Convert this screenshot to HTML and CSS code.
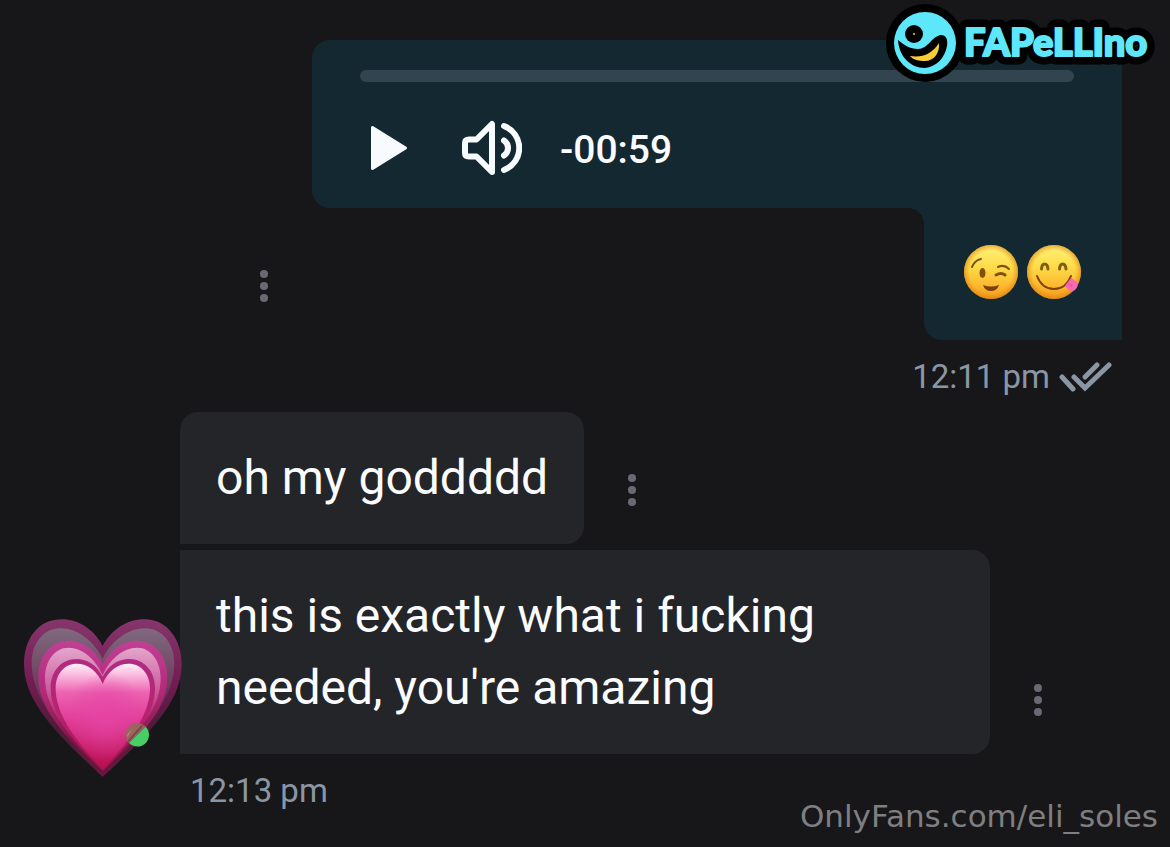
FILE: index.html
```html
<!DOCTYPE html>
<html lang="en">
<head>
  <meta charset="UTF-8" />
  <meta name="viewport" content="width=device-width, initial-scale=1.0"/>
  <title>Chat</title>
  <link rel="stylesheet" href="styles.css">
</head>
<body>

  <main class="chat">

    <section class="group outgoing">
      <div class="row">
        <button class="menu" type="button" aria-label="Message menu"><i></i><i></i><i></i></button>
        <div class="voice">
          <div class="player">
            <input class="track" type="range" min="0" max="59" value="0" aria-label="Seek">
            <div class="controls">
              <button class="play" type="button" aria-label="Play">
                <svg width="64" height="60" viewBox="0 0 64 60">
                  <path d="M12.500 9.500V50.500L45.500 30Z" fill="#f7fbfd" stroke="#f7fbfd" stroke-width="3" stroke-linejoin="round"/>
                </svg>
              </button>
              <button class="volume" type="button" aria-label="Volume">
                <svg width="60" height="60" viewBox="0 0 60 60" fill="none" stroke="#f7fbfd" stroke-width="6" stroke-linecap="round" stroke-linejoin="round">
                  <path d="M30 6V54L14.500 38.500H7Q3 38.500 3 35V25Q3 21.500 7 21.500H14.500Z"/>
                  <path d="M42 8A23.500 23.500 0 0 1 42 52"/>
                  <path d="M42 22.500A9 9 0 0 1 42 37.500"/>
                </svg>
              </button>
              <span class="timer">-00:59</span>
            </div>
          </div>
          <div class="reaction">
            <svg width="56" height="56" viewBox="0 0 56 56" role="img" aria-label="Winking face">
              <defs>
                <linearGradient id="face" x1="0" y1="0" x2="0" y2="1">
                  <stop offset="0" stop-color="#fff27a"/>
                  <stop offset="0.4" stop-color="#fddc4a"/>
                  <stop offset="0.75" stop-color="#fcb92e"/>
                  <stop offset="1" stop-color="#f39a1e"/>
                </linearGradient>
                <radialGradient id="edge">
                  <stop offset="0.78" stop-color="#e88a10" stop-opacity="0"/>
                  <stop offset="1" stop-color="#d87c10" stop-opacity="0.6"/>
                </radialGradient>
              </defs>
              <circle cx="28" cy="28" r="27" fill="url(#face)"/>
              <circle cx="28" cy="28" r="27" fill="url(#edge)"/>
              <g fill="none" stroke="#80500c" stroke-width="2" stroke-linecap="round">
                <path d="M9 23Q12 16 18 15"/>
                <path d="M35 23Q41 20 46 25"/>
                <path d="M33 31Q38 28 42 31" stroke-width="3"/>
              </g>
              <ellipse cx="19.500" cy="29" rx="3" ry="5" fill="#80500c"/>
              <path d="M20 41Q28 44 36 41Q34 47 28 47Q22 47 20 41Z" fill="#7a4010"/>
            </svg>
            <svg width="56" height="56" viewBox="0 0 56 56" role="img" aria-label="Face savoring food">
              <circle cx="28" cy="28" r="27" fill="url(#face)"/>
              <circle cx="28" cy="28" r="27" fill="url(#edge)"/>
              <g fill="none" stroke="#80600c" stroke-width="3" stroke-linecap="round">
                <path d="M15.500 25Q16 20 18.500 20Q21.500 20 22 25"/>
                <path d="M33.500 25Q34 20 36.500 20Q39.500 20 40 25"/>
                <path d="M11 32Q16 45 28 45Q40 45 45 32" stroke="#80400c" stroke-width="2"/>
              </g>
              <path d="M45 34L51 38Q53 42 49 46Q46 48 43 46L39 42Z" fill="#f767b4"/>
              <path d="M43 40L46 42" stroke="#e04a9c" stroke-linecap="round"/>
            </svg>
          </div>
        </div>
      </div>
      <div class="time">
        <span>12:11 pm</span>
        <svg width="54" height="32" viewBox="0 0 54 32" role="img" aria-label="Read" fill="none" stroke="#8a96a3" stroke-width="5" stroke-linecap="round">
          <path d="M4 17L15 29"/>
          <path d="M16 17L27 28L51 5"/>
          <path d="M27 17L39 5"/>
        </svg>
      </div>
    </section>

    <section class="group incoming">
      <div class="avatar">
        <svg width="164" height="164" viewBox="66 48 492 492" role="img" aria-label="Growing heart">
          <defs>
            <linearGradient id="outer" x1="0" y1="0" x2="0" y2="1">
              <stop offset="0" stop-color="#86366c"/>
              <stop offset="0.4" stop-color="#741b54"/>
              <stop offset="0.7" stop-color="#4c1c38"/>
              <stop offset="1" stop-color="#6e1640"/>
            </linearGradient>
            <linearGradient id="outerFill" x1="0" y1="0" x2="0" y2="1">
              <stop offset="0" stop-color="#806a80"/>
              <stop offset="0.35" stop-color="#6f4260"/>
              <stop offset="0.65" stop-color="#5a1c42"/>
              <stop offset="1" stop-color="#54173a"/>
            </linearGradient>
            <linearGradient id="middle" x1="0" y1="0" x2="0" y2="1">
              <stop offset="0" stop-color="#bf4095"/>
              <stop offset="0.4" stop-color="#b42878"/>
              <stop offset="0.75" stop-color="#801648"/>
              <stop offset="1" stop-color="#6c143a"/>
            </linearGradient>
            <linearGradient id="middleFill" x1="0" y1="0" x2="0" y2="1">
              <stop offset="0" stop-color="#e3a6cb"/>
              <stop offset="0.35" stop-color="#cc5a9c"/>
              <stop offset="0.65" stop-color="#9b1c57"/>
              <stop offset="1" stop-color="#80123e"/>
            </linearGradient>
            <linearGradient id="rim" x1="0" y1="0" x2="0" y2="1">
              <stop offset="0" stop-color="#b02c82"/>
              <stop offset="0.5" stop-color="#b8226f"/>
              <stop offset="1" stop-color="#a81250"/>
            </linearGradient>
            <linearGradient id="core" x1="0" y1="0" x2="0" y2="1">
              <stop offset="0" stop-color="#fff0fa"/>
              <stop offset="0.12" stop-color="#fab4dc"/>
              <stop offset="0.28" stop-color="#ec62b0"/>
              <stop offset="0.5" stop-color="#e2429c"/>
              <stop offset="0.75" stop-color="#cc2470"/>
              <stop offset="1" stop-color="#b80f50"/>
            </linearGradient>
            <radialGradient id="glow" cx="0.53" cy="0.5" r="0.42">
              <stop offset="0.2" stop-color="#e644a6" stop-opacity="0.75"/>
              <stop offset="1" stop-color="#e644a6" stop-opacity="0"/>
            </radialGradient>
          </defs>
          <path d="M308 138C282 88 235 58 185 58C112 58 72 120 72 193C72 300 160 395 308 530C458 395 545 300 545 193C545 120 503 58 433 58C381 58 335 88 308 138Z" fill="url(#outer)"/>
          <path d="M308 176C280 120 230 85 182 85C128 85 95 132 95 190C95 295 180 395 308 520C438 395 523 295 523 190C523 132 487 85 436 85C386 85 335 120 308 176Z" fill="url(#outerFill)"/>
          <path d="M308 193C286 149 247 122 206 122C150 122 115 171 115 231C115 325 190 405 308 518C428 405 502 325 502 231C502 171 466 122 411 122C369 122 330 149 308 193Z" fill="url(#middle)"/>
          <path d="M308 226C287 177 247 143 206 143C162 143 135 184 135 235C135 325 205 410 308 511C412 410 482 325 482 235C482 184 454 143 411 143C369 143 329 177 308 226Z" fill="url(#middleFill)"/>
          <path d="M308 230C290 196 262 177 229 177C184 177 152 213 152 264C152 345 215 420 308 512C402 420 465 345 465 264C465 213 432 177 388 177C354 177 326 196 308 230Z" fill="url(#rim)"/>
          <path d="M308 252C293 213 263 191 230 191C193 191 167 222 167 265C167 340 222 420 308 505C395 420 450 340 450 265C450 222 423 191 386 191C354 191 323 213 308 252Z" fill="url(#core)"/>
          <path d="M308 252C293 213 263 191 230 191C193 191 167 222 167 265C167 340 222 420 308 505C395 420 450 340 450 265C450 222 423 191 386 191C354 191 323 213 308 252Z" fill="url(#glow)"/>
          <!-- online dot, half behind the heart -->
          <path d="M387 429A35 35 0 0 1 437 380Z" fill="#98665c"/>
          <path d="M397 386L404 379L382 404L382 412Z" fill="#c08a80"/>
          <path d="M384 421L424 376L430 377L386 427Z" fill="#7a4448"/>
          <path d="M437 380A35 35 0 1 1 387 429Z" fill="#45cf66"/>
        </svg>
      </div>
      <div class="messages">
        <div class="row">
          <p class="bubble">oh my goddddd</p>
          <button class="menu" type="button" aria-label="Message menu"><i></i><i></i><i></i></button>
        </div>
        <div class="row">
          <p class="bubble">this is exactly what i fucking needed, you're amazing</p>
          <button class="menu" type="button" aria-label="Message menu"><i></i><i></i><i></i></button>
        </div>
        <div class="time"><span>12:13 pm</span></div>
      </div>
    </section>

  </main>

  <svg class="brand" width="284" height="86" viewBox="0 0 284 86" role="img" aria-label="Fapellino">
    <circle cx="39" cy="43" r="39" fill="#000"/>
    <g class="brand-outline">
      <text id="brand-name" x="78" y="56">FAPeLLIno</text>
    </g>
    <use class="brand-face" href="#brand-name"/>
    <circle cx="39" cy="43" r="31" fill="#5ee7fb"/>
    <path d="M12 40C18 45 24 49 32 49C42 49 46 36 55 35C60 35 62 39 61 46C59 58 50 67 39 68C24 68 13 56 12 40Z" fill="#000"/>
    <circle cx="28" cy="34" r="9" fill="#000"/>
    <circle cx="28" cy="34" r="1" fill="#f7cc35"/>
    <path d="M24 56C36 58 46 54 53 43C54 53 48 61 39 61C33 61 27 60 24 56Z" fill="#f7cc35"/>
  </svg>

  <a class="watermark" href="#">OnlyFans.com/eli_soles</a>

</body>
</html>
```
FILE: styles.css
```css
* {
  box-sizing: border-box;
}

body {
  position: relative;
  min-height: 100vh;
  margin: 0;
  background: #17171a;
  color: #fbfcff;
  font-family: Roboto, sans-serif;
  overflow-x: hidden;
}

button {
  padding: 0;
  border: none;
  background: none;
  cursor: pointer;
}

svg {
  display: block;
}

.chat {
  padding-top: 40px;
}

.row {
  display: flex;
  align-items: flex-end;
}

.outgoing {
  padding-right: 48px;
}

.outgoing .row {
  justify-content: flex-end;
}

.menu {
  display: flex;
  flex: 0 0 96px;
  flex-direction: column;
  align-items: center;
  justify-content: center;
  gap: 4px;
  height: 108px;
}

.menu i {
  width: 8px;
  height: 8px;
  border-radius: 50%;
  background: #696a74;
}

.voice {
  display: flex;
  flex: 0 1 810px;
  flex-direction: column;
  align-items: flex-end;
}

.player {
  width: 100%;
  padding: 30px 48px 24px;
  border-radius: 18px 18px 0 18px;
  background: #132830;
}

.track {
  display: block;
  width: 100%;
  height: 12px;
  margin: 0 0 30px;
  border-radius: 6px;
  background: #32444f;
  appearance: none;
}

.track::-webkit-slider-thumb {
  width: 0;
  height: 0;
  appearance: none;
}

.controls {
  display: flex;
  align-items: center;
  gap: 38px;
  height: 72px;
}

.timer {
  padding-top: 4px;
  font-size: 39px;
  font-weight: 500;
}

.reaction {
  position: relative;
  display: flex;
  gap: 7px;
  padding: 36px 40px 40px 39px;
  border-radius: 0 0 0 18px;
  background: #132830;
}

/* inner curve where the two bubbles join */
.reaction::before {
  content: "";
  position: absolute;
  top: 0;
  right: 100%;
  width: 16px;
  height: 16px;
  background: radial-gradient(circle at 0 100%, transparent 16px, #132830 16px);
}

.time {
  display: flex;
  align-items: center;
  gap: 8px;
  height: 72px;
  padding: 0 10px;
  color: #8a96a3;
  font-size: 33px;
}

.outgoing .time {
  justify-content: flex-end;
}

.incoming {
  display: flex;
  align-items: flex-end;
}

.avatar {
  z-index: 1;
  flex: 0 0 180px;
  min-width: 0;
  padding: 0 0 46px 22px;
}

.messages {
  flex: 1;
  min-width: 0;
}

.messages .row + .row {
  margin-top: 6px;
}

.bubble {
  max-width: 810px;
  margin: 0;
  padding: 30px 36px;
  border-radius: 0 18px 18px 0;
  background: #242529;
  font-size: 48px;
  line-height: 72px;
}

.row:first-child .bubble {
  border-top-left-radius: 18px;
}

.brand {
  position: absolute;
  top: 0;
  right: 0;
  fill: #5ee7fb;
  stroke-linejoin: round;
  font-family: Lato, sans-serif;
  font-size: 38px;
  font-weight: 900;
}

.brand-outline {
  stroke: #000;
  stroke-width: 17px;
}

.brand-face {
  stroke: #5ee7fb;
  stroke-width: 2px;
}

.watermark {
  position: absolute;
  right: 12px;
  bottom: 13px;
  color: #7f7f81;
  font-family: "DejaVu Sans", sans-serif;
  font-size: 31px;
  text-decoration: none;
}
```
